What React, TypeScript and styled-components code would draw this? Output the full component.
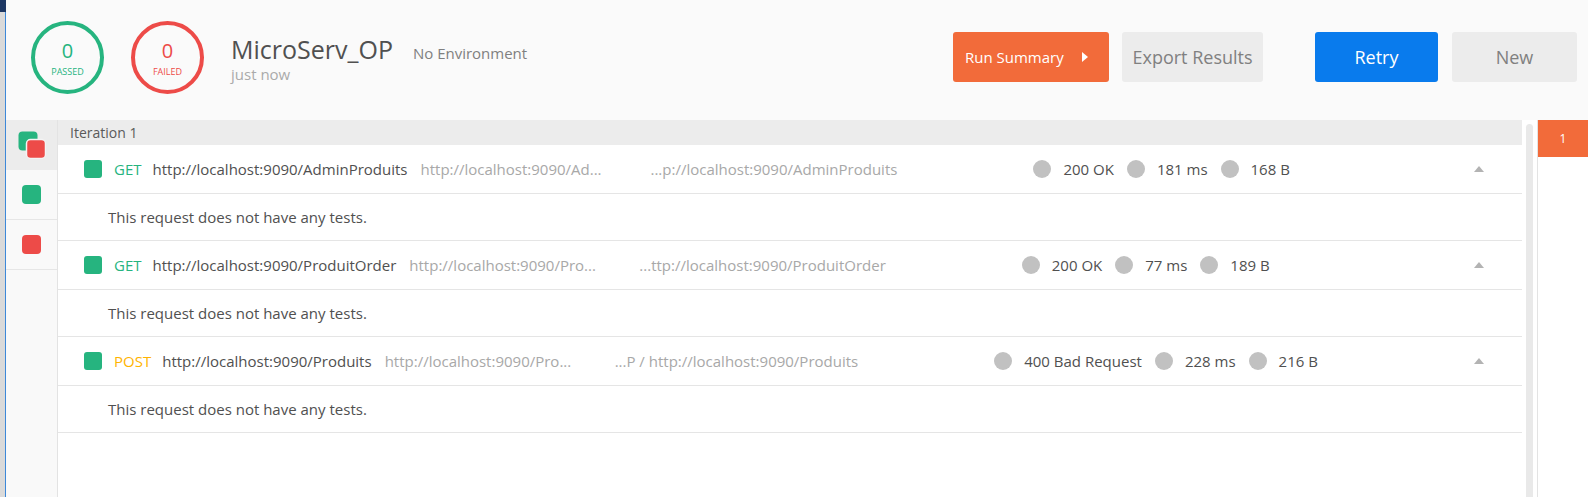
import React from 'react';
import styled, { createGlobalStyle } from 'styled-components';

const GlobalStyle = createGlobalStyle`
html, body {
    margin: 0;
    padding: 0;
}
body {
    font-family: "Open Sans", "Noto Sans", sans-serif;
    background: #ffffff;
    overflow: hidden;
}
`;

const GREEN = '#26b47f';
const RED = '#ed4b48';
const ORANGE = '#f26b3a';
const BLUE = '#097bed';

const Frame = styled.div`
width: 1588px;
height: 497px;
display: flex;
`;

const Edge = styled.div`
width: 6px;
flex: none;
display: flex;
flex-direction: column;
`;

const EdgeCap = styled.div`
height: 12px;
background: #1d3864;
`;

const EdgeStrip = styled.div`
flex: 1;
background: #dadada;
border-right: 1px solid #3d88d8;
`;

const Main = styled.div`
flex: 1;
min-width: 0;
display: flex;
flex-direction: column;
`;

const Header = styled.header`
height: 120px;
flex: none;
box-sizing: border-box;
background: #fafafa;
display: flex;
align-items: center;
padding: 0 11px 6px 25px;
`;

const Counter = styled.div<{ $color: string }>`
width: 73px;
height: 73px;
box-sizing: border-box;
border: 4px solid ${p => p.$color};
border-radius: 50%;
color: ${p => p.$color};
display: flex;
flex-direction: column;
align-items: center;
justify-content: center;
padding-top: 4px;
margin-right: 27px;
flex: none;
`;

const CountValue = styled.span`
font-size: 20px;
line-height: 22px;
`;

const CountLabel = styled.span`
font-size: 9px;
line-height: 12px;
margin-top: 4px;
text-transform: uppercase;
`;

const TitleBlock = styled.div`
display: flex;
flex-direction: column;
padding-top: 4px;
`;

const TitleRow = styled.div`
display: flex;
align-items: baseline;
`;

const Title = styled.h1`
margin: 0;
font-size: 25px;
line-height: 30px;
font-weight: 400;
color: #505050;
`;

const Env = styled.span`
margin-left: 20px;
font-size: 15px;
color: #808080;
`;

const Subtitle = styled.span`
font-size: 15px;
line-height: 20px;
color: #aaaaaa;
`;

const Actions = styled.div`
margin-left: auto;
display: flex;
align-items: center;
`;

const Button = styled.button<{ $kind: 'orange' | 'blue' | 'gray'; $width: number; $gap?: number }>`
width: ${p => p.$width}px;
height: 50px;
margin-left: ${p => p.$gap || 0}px;
border: none;
border-radius: 3px;
font-family: inherit;
font-size: 18px;
display: flex;
align-items: center;
justify-content: center;
background: ${p => (p.$kind === 'orange' ? ORANGE : p.$kind === 'blue' ? BLUE : '#ececec')};
color: ${p => (p.$kind === 'gray' ? '#808080' : '#ffffff')};
`;

const SummaryButton = styled(Button)`
justify-content: space-between;
padding: 0 21px 0 12px;
font-size: 15px;
`;

const Body = styled.div`
flex: 1;
min-height: 0;
display: flex;
`;

const Sidebar = styled.nav`
width: 52px;
flex: none;
box-sizing: border-box;
background: #f9f9f9;
border-right: 1px solid #e3e3e3;
display: flex;
flex-direction: column;
`;

const SideItem = styled.div<{ $active?: boolean }>`
height: 50px;
box-sizing: border-box;
border-bottom: 1px solid ${p => (p.$active ? '#ececec' : '#e6e6e6')};
background: ${p => (p.$active ? '#ececec' : 'transparent')};
display: flex;
align-items: center;
justify-content: center;
`;

const Square = styled.span<{ $color: string; $size?: number }>`
width: ${p => p.$size || 18}px;
height: ${p => p.$size || 18}px;
border-radius: ${p => (p.$size ? 4 : 3)}px;
background: ${p => p.$color};
flex: none;
`;

const Results = styled.section`
flex: 1;
min-width: 0;
display: flex;
flex-direction: column;
`;

const IterationBar = styled.div`
height: 25px;
flex: none;
background: #ececec;
padding-left: 12px;
display: flex;
align-items: center;
font-size: 14px;
color: #5a5a5a;
`;

const RequestRow = styled.div`
height: 49px;
box-sizing: border-box;
border-bottom: 1px solid #e5e5e5;
display: flex;
align-items: center;
padding-left: 26px;
font-size: 15px;
white-space: nowrap;
`;

const Method = styled.span<{ $color: string }>`
margin-left: 12px;
margin-right: 11px;
color: ${p => p.$color};
`;

const Name = styled.span`
color: #505050;
margin-right: 13px;
`;

const Url = styled.span<{ $width?: number }>`
color: #a8a8a8;
${p => (p.$width ? `width: ${p.$width}px; flex: none;` : '')}
`;

const Stats = styled.div`
margin-left: 136px;
display: flex;
align-items: center;
color: #505050;
`;

const Dot = styled.span`
width: 18px;
height: 18px;
border-radius: 50%;
background: #c1c1c1;
margin-right: 12px;
flex: none;
`;

const StatText = styled.span`
margin-right: 13px;
`;

const Caret = styled.svg`
margin-left: auto;
margin-right: 38px;
`;

const TestRow = styled.div`
height: 47px;
box-sizing: border-box;
border-bottom: 1px solid #e5e5e5;
display: flex;
align-items: center;
padding-left: 50px;
font-size: 15px;
color: #505050;
`;

const ScrollTrack = styled.div`
width: 7px;
flex: none;
margin: 4px 4px 0;
background: #e9e9e9;
border-radius: 4px 4px 0 0;
`;

const RightPanel = styled.aside`
width: 51px;
flex: none;
box-sizing: border-box;
border-left: 1px solid #e3e3e3;
background: #ffffff;
`;

const RunTab = styled.div`
height: 37px;
background: ${ORANGE};
color: #ffffff;
font-size: 12px;
display: flex;
align-items: center;
justify-content: center;
`;

type Req = {
    method: string;
    name: string;
    short: string;
    tail: string;
    status: string;
    time: string;
    size: string;
};

const requests: Req[] = [
    {
        method: 'GET',
        name: 'http://localhost:9090/AdminProduits',
        short: 'http://localhost:9090/Ad...',
        tail: '...p://localhost:9090/AdminProduits',
        status: '200 OK',
        time: '181 ms',
        size: '168 B',
    },
    {
        method: 'GET',
        name: 'http://localhost:9090/ProduitOrder',
        short: 'http://localhost:9090/Pro...',
        tail: '...ttp://localhost:9090/ProduitOrder',
        status: '200 OK',
        time: '77 ms',
        size: '189 B',
    },
    {
        method: 'POST',
        name: 'http://localhost:9090/Produits',
        short: 'http://localhost:9090/Pro...',
        tail: '...P / http://localhost:9090/Produits',
        status: '400 Bad Request',
        time: '228 ms',
        size: '216 B',
    },
];

const methodColor = (m: string) => (m === 'POST' ? '#ffb400' : GREEN);

const App = () => {
    return (
        <Frame>
            <GlobalStyle />
            <Edge>
                <EdgeCap />
                <EdgeStrip />
            </Edge>
            <Main>
                <Header>
                    <Counter $color={GREEN}>
                        <CountValue>0</CountValue>
                        <CountLabel>Passed</CountLabel>
                    </Counter>
                    <Counter $color={RED}>
                        <CountValue>0</CountValue>
                        <CountLabel>Failed</CountLabel>
                    </Counter>
                    <TitleBlock>
                        <TitleRow>
                            <Title>MicroServ_OP</Title>
                            <Env>No Environment</Env>
                        </TitleRow>
                        <Subtitle>just now</Subtitle>
                    </TitleBlock>
                    <Actions>
                        <SummaryButton $kind="orange" $width={156}>
                            <span>Run Summary</span>
                            <svg width="6" height="10" viewBox="0 0 6 10">
                                <path d="M0 0 L6 5 L0 10 Z" fill="#ffffff" />
                            </svg>
                        </SummaryButton>
                        <Button $kind="gray" $width={141} $gap={13}>Export Results</Button>
                        <Button $kind="blue" $width={123} $gap={52}>Retry</Button>
                        <Button $kind="gray" $width={125} $gap={14}>New</Button>
                    </Actions>
                </Header>
                <Body>
                    <Sidebar>
                        <SideItem $active>
                            <svg width="28" height="28" viewBox="0 0 28 28">
                                <rect x="0.5" y="0.5" width="19" height="19" rx="4" fill={GREEN} />
                                <rect x="8.5" y="8.5" width="19" height="19" rx="4" fill={RED} stroke="#f4f4f4" strokeWidth="1.5" />
                            </svg>
                        </SideItem>
                        <SideItem>
                            <Square $color={GREEN} $size={19} />
                        </SideItem>
                        <SideItem>
                            <Square $color={RED} $size={19} />
                        </SideItem>
                    </Sidebar>
                    <Results>
                        <IterationBar>Iteration 1</IterationBar>
                        {requests.map((r, i) => (
                            <React.Fragment key={i}>
                                <RequestRow>
                                    <Square $color={GREEN} />
                                    <Method $color={methodColor(r.method)}>{r.method}</Method>
                                    <Name>{r.name}</Name>
                                    <Url $width={230}>{r.short}</Url>
                                    <Url>{r.tail}</Url>
                                    <Stats>
                                        <Dot />
                                        <StatText>{r.status}</StatText>
                                        <Dot />
                                        <StatText>{r.time}</StatText>
                                        <Dot />
                                        <StatText>{r.size}</StatText>
                                    </Stats>
                                    <Caret width="10" height="6" viewBox="0 0 10 6">
                                        <path d="M0 6 L5 0 L10 6 Z" fill="#b3b3b3" />
                                    </Caret>
                                </RequestRow>
                                <TestRow>This request does not have any tests.</TestRow>
                            </React.Fragment>
                        ))}
                    </Results>
                    <ScrollTrack />
                    <RightPanel>
                        <RunTab>1</RunTab>
                    </RightPanel>
                </Body>
            </Main>
        </Frame>
    );
};

export default App;
